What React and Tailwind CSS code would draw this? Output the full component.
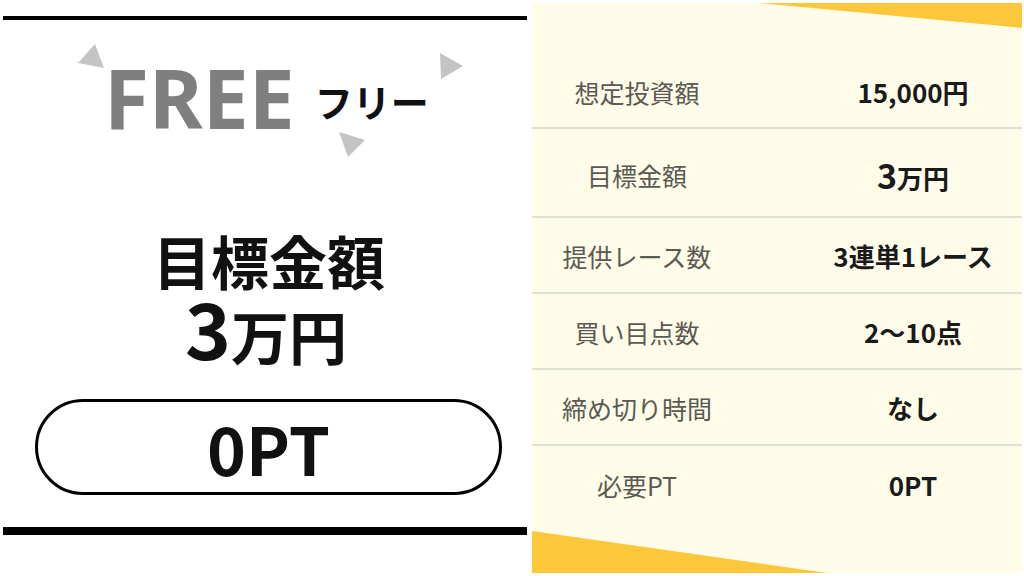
export default function App() {
  const rows = [
    { label: "想定投資額", value: <span>15,000円</span>, h: "h-[72px]", extra: "" },
    {
      label: "目標金額",
      value: (
        <span className="flex items-baseline justify-center">
          <span className="text-[34px] leading-none">3</span>
          <span className="leading-none">万円</span>
        </span>
      ),
      h: "h-[89px]",
      extra: "pt-[5px]",
    },
    { label: "提供レース数", value: <span>3連単1レース</span>, h: "h-[76px]", extra: "pt-[2px]" },
    { label: "買い目点数", value: <span>2〜10点</span>, h: "h-[76px]", extra: "pt-[2px]" },
    { label: "締め切り時間", value: <span>なし</span>, h: "h-[76px]", extra: "pt-[2px]" },
    { label: "必要PT", value: <span>0PT</span>, h: "h-[76px]", extra: "pt-[2px]", last: true },
  ];

  return (
    <div
      className="w-[1024px] h-[576px] bg-white flex overflow-hidden"
      style={{ fontFamily: '"Noto Sans CJK JP", "Noto Sans", sans-serif' }}
    >
      {/* Left panel */}
      <div className="relative w-[532px] h-full flex flex-col pt-[16px]">
        <div className="ml-[3px] w-[524px] h-[4px] bg-black" />

        <svg
          className="absolute left-0 top-0"
          width="532"
          height="200"
          viewBox="0 0 532 200"
        >
          <polygon points="78,63 95,44 104,68" fill="#c4c4c4" />
          <polygon points="440,53 463,66 441,79" fill="#c4c4c4" />
          <polygon points="339,132 365,140 348,157" fill="#c4c4c4" />
        </svg>

        <div className="mt-[37px] ml-[104px] h-[80px] flex items-start">
          <span
            className="text-[82px] leading-[80px] font-bold text-[#7f7f7f]"
            style={{ fontFamily: '"Noto Sans", sans-serif' }}
          >
            FREE
          </span>
          <span className="mt-[25px] ml-[20px] text-[38px] leading-[38px] font-bold text-[#111]">
            フリー
          </span>
        </div>

        <div className="mt-[94px] text-center text-[58px] leading-[58px] font-bold text-[#111] pl-[6px]">
          目標金額
        </div>
        <div className="mt-[7px] h-[67px] flex items-baseline justify-center font-bold text-[#111]">
          <span className="text-[78px] leading-[60px]">3</span>
          <span className="text-[58px] leading-[58px]">万円</span>
        </div>

        <div className="mt-[36px] ml-[35px] w-[467px] h-[96px] shrink-0 rounded-full border-[3px] border-black flex items-center justify-center">
          <span className="text-[66px] leading-none font-bold text-[#111]">0PT</span>
        </div>

        <div className="mt-[32px] ml-[3px] w-[524px] h-[8px] shrink-0 bg-black" />
      </div>

      {/* Right panel */}
      <div className="relative mt-[3px] w-[490px] h-[570px] bg-[#fffce9] flex flex-col pt-[54px]">
        <svg
          className="absolute left-0 top-0"
          width="490"
          height="570"
          viewBox="0 0 490 570"
        >
          <polygon points="228,0 490,0 490,25" fill="#fcc73b" />
          <polygon points="0,528 295,570 0,570" fill="#fcc73b" />
        </svg>

        {rows.map((r, i) => (
          <div
            key={i}
            className={`relative shrink-0 flex items-center ${r.h} ${r.extra} ${
              r.last ? "" : "border-b-[2px] border-[#e2dfd3]"
            }`}
          >
            <div className="w-[210px] text-center text-[25px] leading-none text-[#5a5a52]">
              {r.label}
            </div>
            <div className="flex-1 pl-[62px] flex justify-center text-[26px] leading-none font-bold text-[#1a1a1a]">
              {r.value}
            </div>
          </div>
        ))}
      </div>
    </div>
  );
}
